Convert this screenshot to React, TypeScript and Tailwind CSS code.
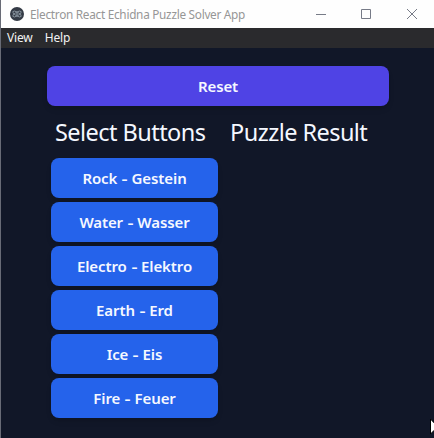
import React from "react";

const elements = [
  ["Rock", "Gestein"],
  ["Water", "Wasser"],
  ["Electro", "Elektro"],
  ["Earth", "Erd"],
  ["Ice", "Eis"],
  ["Fire", "Feuer"],
];

function AppIcon() {
  return (
    <svg width="14" height="14" viewBox="0 0 14 14" fill="none">
      <circle cx="7" cy="7" r="7" fill="#343b46" />
      <g stroke="#a9b7c2" strokeWidth="0.6">
        <ellipse cx="7" cy="7" rx="4.8" ry="1.8" transform="rotate(30 7 7)" />
        <ellipse cx="7" cy="7" rx="4.8" ry="1.8" transform="rotate(-30 7 7)" />
      </g>
      <circle cx="7" cy="7" r="0.8" fill="#a9b7c2" />
    </svg>
  );
}

function TitleBar() {
  return (
    <header className="flex h-7 items-center bg-[#fefefe] pl-[9px] text-[#969696]">
      <AppIcon />
      <h1 className="ml-[6px] whitespace-nowrap text-[11.8px] leading-4 tracking-[-0.28px]">
        Electron React Echidna Puzzle Solver App
      </h1>
      <svg className="ml-auto mr-[16px] shrink-0" width="102" height="12" viewBox="0 0 102 12" fill="none" stroke="#777b87">
        <path d="M0 6.5H10M45.5 1.5H54.5V10.5H45.5ZM91 1L101 11M101 1L91 11" />
      </svg>
    </header>
  );
}

export default function App() {
  return (
    <div className="relative flex h-[438px] w-[434px] flex-col overflow-hidden border-l border-[#686b76] bg-[#111728] font-['Noto_Sans',sans-serif]">
      <TitleBar />
      <nav className="flex h-5 items-center gap-[12px] bg-[#2a2a2d] pl-[6px] text-[12px] leading-4 text-[#f2f2f2]">
        <span className="tracking-[-0.15px]">View</span>
        <span className="tracking-[-0.15px]">Help</span>
      </nav>
      <main className="pl-[46px] pt-[18px] text-[#f5f8ff]">
        <button className="flex h-10 w-[342px] items-center justify-center rounded-lg bg-[#4f43e5] text-[15px] font-semibold tracking-[-0.1px] shadow-md">
          Reset
        </button>
        <div className="flex pt-[10px]">
          <section className="w-[183px]">
            <h2 className="whitespace-nowrap pl-[8px] text-[23.5px] leading-8 tracking-[-0.55px]">Select Buttons</h2>
            <div className="ml-1 mt-[10px] flex w-[167px] flex-col gap-1">
              {elements.map(([english, german]) => (
                <button key={english} className="flex h-10 items-center justify-center whitespace-pre rounded-lg bg-[#2563eb] text-[15px] font-semibold tracking-[-0.1px] shadow-md">
                  <span>
                    {english} <span className="mx-[1px] inline-block scale-x-125">-</span> {german}
                  </span>
                </button>
              ))}
            </div>
          </section>
          <section>
            <h2 className="whitespace-nowrap text-[23.5px] leading-8 tracking-[-0.55px]">Puzzle Result</h2>
          </section>
        </div>
      </main>
      <svg className="absolute left-[429px] top-[418px]" width="12" height="19" viewBox="0 0 12 19">
        <path d="M0.5 1V16L4 12.5L6.5 18L9 17L6.5 12H11Z" fill="white" stroke="black" />
      </svg>
    </div>
  );
}
